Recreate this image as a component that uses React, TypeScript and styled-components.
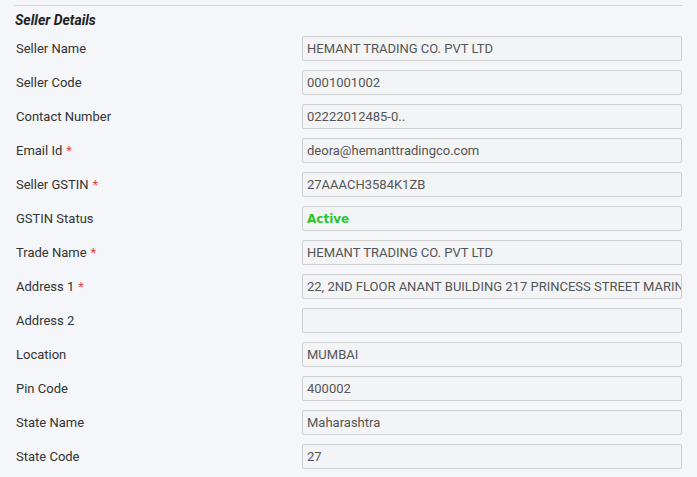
import React from "react";
import styled, { createGlobalStyle } from "styled-components";

const Global = createGlobalStyle`
  html, body { margin: 0; padding: 0; background: #f4f6f9; }
  body { font-family: Roboto, "Liberation Sans", sans-serif; }
`;

const Wrapper = styled.div`
  padding: 5px 0 0 14px;
  width: 669px;
`;

const Section = styled.section`
  border-top: 1px solid #c8dbec;
`;

const Title = styled.h3`
  margin: 0;
  height: 30px;
  line-height: 28px;
  padding-left: 1px;
  font-size: 14px;
  font-weight: 700;
  font-style: italic;
  color: #222;
`;

const Grid = styled.div`
  display: grid;
  grid-template-columns: 288px 380px;
  row-gap: 9px;
`;

const Label = styled.label`
  display: flex;
  align-items: center;
  padding-left: 2px;
  font-size: 13px;
  color: #333;
`;

const Star = styled.span`
  color: #e94040;
  margin-left: 4px;
`;

const Field = styled.div<{ $status?: boolean }>`
  box-sizing: border-box;
  height: 25px;
  border: 1px solid #cfcfcf;
  border-radius: 2px;
  background: #f3f4f6;
  padding: 0 4px;
  display: flex;
  align-items: center;
  overflow: hidden;
  white-space: nowrap;
  font-family: ${(p) => (p.$status ? '"DejaVu Sans", Verdana, sans-serif' : 'Roboto, "Liberation Sans", sans-serif')};
  font-size: ${(p) => (p.$status ? "12px" : "13px")};
  font-weight: ${(p) => (p.$status ? 700 : 400)};
  color: ${(p) => (p.$status ? "#2bc42b" : "#555")};
`;

const rows: { label: string; value: string; req?: boolean; status?: boolean }[] = [
  { label: "Seller Name", value: "HEMANT TRADING CO. PVT LTD" },
  { label: "Seller Code", value: "0001001002" },
  { label: "Contact Number", value: "02222012485-0.." },
  { label: "Email Id", value: "deora@hemanttradingco.com", req: true },
  { label: "Seller GSTIN", value: "27AAACH3584K1ZB", req: true },
  { label: "GSTIN Status", value: "Active", status: true },
  { label: "Trade Name", value: "HEMANT TRADING CO. PVT LTD", req: true },
  { label: "Address 1", value: "22, 2ND FLOOR ANANT BUILDING 217 PRINCESS STREET MARINE LINES", req: true },
  { label: "Address 2", value: "" },
  { label: "Location", value: "MUMBAI" },
  { label: "Pin Code", value: "400002" },
  { label: "State Name", value: "Maharashtra" },
  { label: "State Code", value: "27" },
];

export default function App() {
  return (
    <>
      <Global />
      <Wrapper>
        <Section>
          <Title>Seller Details</Title>
          <Grid>
            {rows.map((r) => (
              <React.Fragment key={r.label}>
                <Label>
                  {r.label}
                  {r.req && <Star>*</Star>}
                </Label>
                <Field $status={r.status}>{r.value}</Field>
              </React.Fragment>
            ))}
          </Grid>
        </Section>
      </Wrapper>
    </>
  );
}
